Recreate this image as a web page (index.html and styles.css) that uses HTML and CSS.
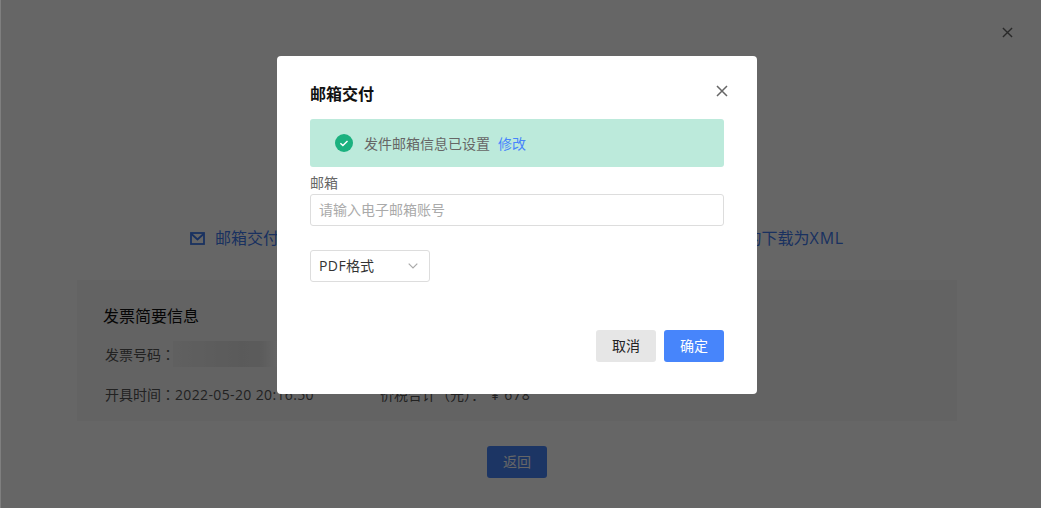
FILE: index.html
```html
<!DOCTYPE html>
<html lang="zh-CN">
<head>
<meta charset="utf-8">
<title>邮箱交付</title>
<link rel="stylesheet" href="styles.css">
</head>
<body>
<main class="page">
  <div class="page-close-row">
    <svg class="icon-x" width="11" height="11" viewBox="0 0 12 12"><path d="M1 1l10 10M11 1L1 11"/></svg>
  </div>
  <div class="links">
    <a class="link">
      <svg width="15" height="13" viewBox="0 0 15 13" class="mail"><rect x="1" y="1" width="13" height="11"/><path d="M1.5 2l6 5.5 6-5.5"/></svg>
      邮箱交付
    </a>
    <a class="link">的下载为<span class="latin-wide">XML</span></a>
  </div>
  <section class="card">
    <h2 class="card-title">发票简要信息</h2>
    <div class="card-row">
      <div class="cell-a">发票号码<span class="punct">：</span><span class="blur"></span></div>
    </div>
    <div class="card-row">
      <div class="cell-a">开具时间<span class="punct">：</span><span class="spaced">2022-05-20 20:16:50</span></div>
      <div class="cell-b">价税合计<span class="punct">（元）：</span><span class="amount">¥ 678</span></div>
    </div>
  </section>
  <div class="back-row"><button class="back">返回</button></div>
</main>

<div class="overlay">
  <div class="modal">
    <button class="modal-close" aria-label="关闭">
      <svg class="icon-x" width="12" height="12" viewBox="0 0 12 12"><path d="M1 1l10 10M11 1L1 11"/></svg>
    </button>
    <h1 class="modal-title">邮箱交付</h1>
    <div class="alert">
      <svg class="check" width="18" height="18" viewBox="0 0 18 18"><circle cx="9" cy="9" r="9"/><path d="M5.4 9.2l2.5 2.4 4.6-4.6"/></svg>
      <span class="alert-text">发件邮箱信息已设置</span>
      <a class="alert-link">修改</a>
    </div>
    <label class="field-label">邮箱</label>
    <div class="input">请输入电子邮箱账号</div>
    <div class="select">
      <span class="select-value"><span class="spaced-pdf">PDF</span>格式</span>
      <svg width="10" height="6" viewBox="0 0 10 6"><path d="M.7.7L5 5l4.3-4.3"/></svg>
    </div>
    <div class="actions">
      <button class="btn btn-cancel"><span class="btn-text">取消</span></button>
      <button class="btn btn-ok"><span class="btn-text">确定</span></button>
    </div>
  </div>
</div>
</body>
</html>
```
FILE: styles.css
```css
* { box-sizing: border-box; }
html, body { margin: 0; height: 100%; }
body {
  background: #fff;
  font-family: "Open Sans", "Noto Sans CJK SC", sans-serif;
  font-size: 14px;
  color: #333;
  overflow: hidden;
}
.page { width: 1034px; height: 508px; }
.page-close-row { display: flex; justify-content: flex-end; padding: 27px 21px 0 0; height: 227px; }
.icon-x path { fill: none; stroke: #666; stroke-width: 1.5; }
.links {
  display: flex;
  justify-content: space-between;
  width: 656px;
  margin: 0 auto;
  height: 53px;
  padding-left: 1px;
  font-size: 16px;
  line-height: 22px;
  color: #3f7bf0;
}
.link { display: flex; align-items: center; gap: 10px; height: 22px; }
.link:last-child { gap: 0; margin-right: 1px; }
.latin-wide { letter-spacing: .8px; }
.mail rect, .mail path { fill: none; stroke: #3f7bf0; stroke-width: 1.8; }
.card {
  width: 880px;
  height: 141px;
  margin-left: 77px;
  padding: 24px 26px 0;
  background: #f8f8f8;
}
.card-title { margin: 0; font-size: 16px; font-weight: 400; line-height: 24px; color: #111; }
.card-row { display: flex; align-items: center; height: 40px; margin: 6px 0 0 2px; color: #555; }
.card-row + .card-row { margin-top: 0; }
.cell-a { display: flex; align-items: center; width: 275px; white-space: nowrap; }
.punct { font-family: "Noto Sans CJK TC", sans-serif; }
.spaced { letter-spacing: .36px; }
.amount { letter-spacing: .8px; margin-left: 6px; }
.blur {
  display: block;
  width: 106px;
  height: 26px;
  margin-left: -2px;
  background: linear-gradient(90deg, #f0f0f0, #e2e2e2 65%, #e4e4e4 82%, #fff);
}
.back-row { display: flex; justify-content: center; padding: 25px 0 0 0; }
.back {
  width: 60px;
  height: 32px;
  padding: 0 0 2px;
  border: 0;
  border-radius: 3px;
  background: #4785fb;
  color: #fff;
  font: inherit;
}
.overlay {
  position: fixed;
  inset: 0;
  display: flex;
  justify-content: center;
  align-items: flex-start;
  padding: 56px 8px 0 0;
  border-left: 1px solid rgba(0, 0, 0, .5);
  background: rgba(0, 0, 0, .6);
  background-clip: padding-box;
}
.modal {
  position: relative;
  width: 480px;
  height: 338px;
  padding: 0 33px;
  border-radius: 4px;
  background: #fff;
}
.modal-close {
  position: absolute;
  top: 29px;
  right: 29px;
  display: flex;
  padding: 0;
  border: 0;
  background: none;
}
.modal-title {
  margin: 0;
  padding-top: 26px;
  height: 63px;
  font-size: 16px;
  font-weight: 700;
  line-height: 24px;
  color: #111;
}
.alert {
  display: flex;
  align-items: center;
  height: 48px;
  padding-left: 25px;
  border-radius: 3px;
  background: #bceadb;
  color: #666;
}
.check circle { fill: #1bb17f; }
.check path { fill: none; stroke: #fff; stroke-width: 1.4; }
.alert-text { margin-left: 11px; }
.alert-link { margin-left: 8px; color: #4785fb; }
.field-label { display: block; height: 27px; padding-top: 6px; line-height: 20px; color: #666; }
.input {
  height: 32px;
  padding-left: 8px;
  border: 1px solid #ddd;
  border-radius: 3px;
  line-height: 29px;
  color: #aaa;
}
.select {
  display: flex;
  align-items: center;
  justify-content: space-between;
  width: 120px;
  height: 32px;
  margin-top: 24px;
  padding: 0 11px 0 8px;
  border: 1px solid #ddd;
  border-radius: 3px;
  color: #333;
}
.select-value { line-height: 30px; height: 30px; }
.spaced-pdf { letter-spacing: .4px; }
.select path { fill: none; stroke: #aaa; stroke-width: 1.2; }
.actions { display: flex; justify-content: flex-end; gap: 8px; margin-top: 48px; }
.btn {
  width: 60px;
  height: 32px;
  padding: 0 0 2px;
  border: 0;
  border-radius: 3px;
  font: inherit;
}
.btn-cancel { background: #e6e6e6; color: #222; }
.btn-ok { background: #4785fb; color: #fff; }
```
